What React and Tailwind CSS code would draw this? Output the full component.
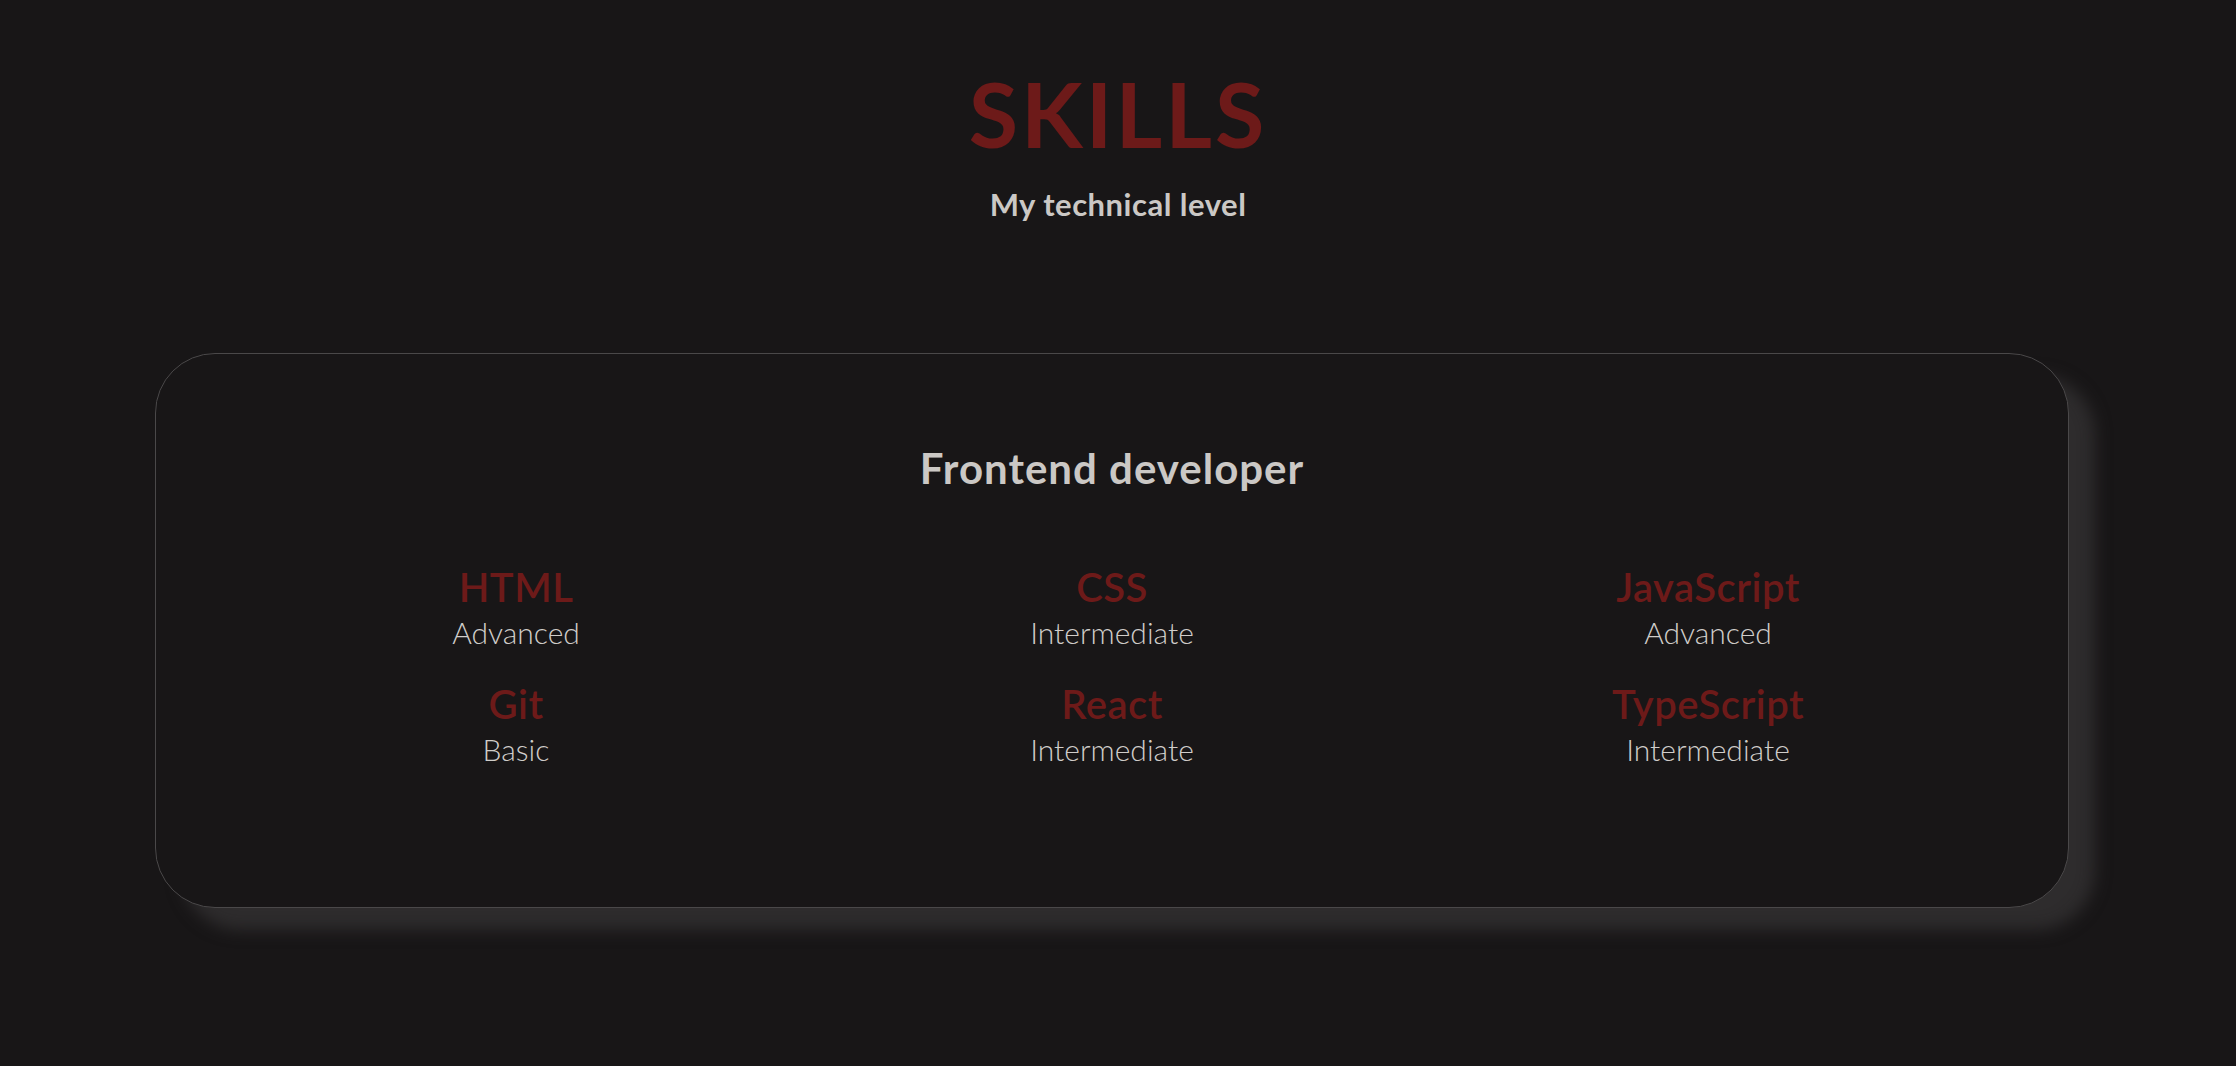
import React from "react";

const skills = [
  { name: "HTML", level: "Advanced" },
  { name: "CSS", level: "Intermediate" },
  { name: "JavaScript", level: "Advanced" },
  { name: "Git", level: "Basic" },
  { name: "React", level: "Intermediate" },
  { name: "TypeScript", level: "Intermediate" },
];

export default function App() {
  return (
    <div
      className="min-h-[1066px] w-full bg-[#181617] pt-[68px]"
      style={{ fontFamily: "Lato, 'Noto Sans', sans-serif" }}
    >
      <h1 className="text-center text-[90px] leading-none font-bold tracking-[3px] text-[#6d1a19]">
        SKILLS
      </h1>
      <p className="mt-[31px] text-center text-[31px] leading-none font-bold tracking-[0.5px] text-[#cbc8c5]">
        My technical level
      </p>
      <div className="mt-[133px] ml-[155px] w-[1914px] h-[555px] rounded-[60px] border border-[#4a4849] bg-[#181617] shadow-[26px_22px_16px_#2e2c2d] px-[62px] pt-[93px]">
        <h2 className="text-center text-[42px] leading-none font-bold tracking-[1px] text-[#cbc8c5]">
          Frontend developer
        </h2>
        <div className="mt-[78px] grid grid-cols-3 gap-y-[37px]">
          {skills.map((s) => (
            <div key={s.name} className="flex flex-col items-center">
              <span className="text-[40px] leading-none font-semibold tracking-[0.5px] text-[#6d1a19]">
                {s.name}
              </span>
              <span className="mt-[10px] text-[30px] leading-none font-light text-[#d0cdca]">
                {s.level}
              </span>
            </div>
          ))}
        </div>
      </div>
    </div>
  );
}
